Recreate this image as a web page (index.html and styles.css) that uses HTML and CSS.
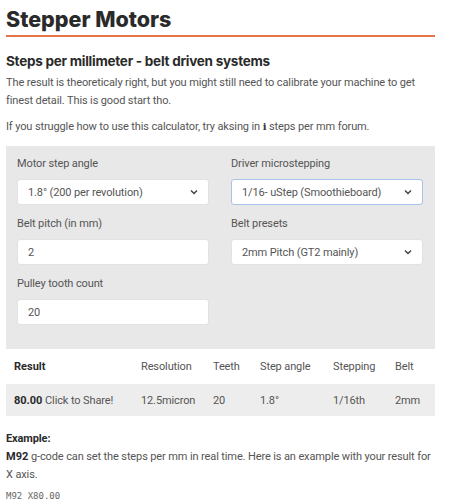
FILE: index.html
```html
<!DOCTYPE html>
<html>
<head>
<meta charset="utf-8">
<link rel="stylesheet" href="styles.css">
</head>
<body>
<div class="page">
  <h1 class="title">Stepper Motors</h1>
  <h2 class="subtitle">Steps per millimeter - belt driven systems</h2>
  <p class="text">The result is theoreticaly right, but you might still need to calibrate your machine to get finest detail. This is good start tho.</p>
  <p class="text">If you struggle how to use this calculator, try aksing in <span class="info">i</span> steps per mm forum.</p>

  <div class="panel">
    <div class="grid">
      <div class="field">
        <div class="label">Motor step angle</div>
        <div class="control select"><span>1.8° (200 per revolution)</span><svg class="chev" width="8" height="6" viewBox="0 0 8 6"><path d="M1 1.5 L4 4.5 L7 1.5" fill="none" stroke="#444" stroke-width="1.5"/></svg></div>
      </div>
      <div class="field">
        <div class="label">Driver microstepping</div>
        <div class="control select focus"><span>1/16- uStep (Smoothieboard)</span><svg class="chev" width="8" height="6" viewBox="0 0 8 6"><path d="M1 1.5 L4 4.5 L7 1.5" fill="none" stroke="#444" stroke-width="1.5"/></svg></div>
      </div>
      <div class="field">
        <div class="label">Belt pitch (in mm)</div>
        <div class="control"><span>2</span></div>
      </div>
      <div class="field">
        <div class="label">Belt presets</div>
        <div class="control select"><span>2mm Pitch (GT2 mainly)</span><svg class="chev" width="8" height="6" viewBox="0 0 8 6"><path d="M1 1.5 L4 4.5 L7 1.5" fill="none" stroke="#444" stroke-width="1.5"/></svg></div>
      </div>
      <div class="field">
        <div class="label">Pulley tooth count</div>
        <div class="control"><span>20</span></div>
      </div>
    </div>
  </div>

  <table class="results">
    <thead>
      <tr>
        <th class="c1 strong">Result</th>
        <th class="c2">Resolution</th>
        <th class="c3">Teeth</th>
        <th class="c4">Step angle</th>
        <th class="c5">Stepping</th>
        <th class="c6">Belt</th>
      </tr>
    </thead>
    <tbody>
      <tr>
        <td><b>80.00</b> Click to Share!</td>
        <td>12.5micron</td>
        <td>20</td>
        <td>1.8°</td>
        <td>1/16th</td>
        <td>2mm</td>
      </tr>
    </tbody>
  </table>

  <div class="example">
    <div class="ex-title">Example:</div>
    <p class="text"><b class="dark">M92 </b>g-code can set the steps per mm in real time. Here is an example with your result for X axis.</p>
    <div class="code">M92 X80.00</div>
  </div>
</div>
</body>
</html>
```
FILE: styles.css
```css
html, body {
  margin: 0;
  padding: 0;
  background: #fff;
}
.page {
  width: 429px;
  padding: 0 6px;
  font-family: Roboto, "Liberation Sans", sans-serif;
  font-size: 11px;
  letter-spacing: -0.12px;
  color: #555;
}
.title {
  margin: 0;
  padding-top: 6px;
  font-family: Inter, "Liberation Sans", sans-serif;
  font-size: 21.5px;
  font-weight: 800;
  line-height: 26px;
  color: #2a2a2a;
  letter-spacing: 0;
  padding-bottom: 3px;
  border-bottom: 2px solid #e4744a;
}
.subtitle {
  margin: 15px 0 0;
  font-family: Inter, "Liberation Sans", sans-serif;
  font-size: 13.5px;
  font-weight: 700;
  line-height: 18px;
  letter-spacing: -0.25px;
  color: #2a2a2a;
}
.text {
  margin: 4px 0 0;
  line-height: 18px;
}
.text + .text {
  margin-top: 8px;
}
.info {
  font-weight: 900;
  color: #333;
  font-family: "DejaVu Serif", serif;
  font-size: 10px;
  letter-spacing: 0;
}
.panel {
  margin-top: 10px;
  background: #e8e8e8;
  padding: 10px 12px 24px 11px;
}
.grid {
  display: grid;
  grid-template-columns: 192px 192px;
  column-gap: 22px;
  row-gap: 11px;
}
.label {
  line-height: 16px;
  margin-bottom: 7px;
  color: #555;
}
.control {
  height: 26px;
  box-sizing: border-box;
  background: #fff;
  border: 1px solid #e2e2e2;
  border-radius: 3px;
  display: flex;
  align-items: center;
  padding: 0 10px;
  color: #555;
}
.select {
  justify-content: space-between;
}
.focus {
  border-color: #a9c3e8;
}
.chev {
  display: block;
}
.results {
  width: 429px;
  border-collapse: collapse;
  margin-top: 0;
  table-layout: fixed;
}
.results th, .results td {
  text-align: left;
  padding: 0 0 0 8px;
  font-weight: 400;
  color: #555;
  white-space: nowrap;
}
.results th {
  height: 35px;
}
.results td {
  height: 32px;
  background: #ededed;
}
.results th.strong, .results b, .dark {
  font-weight: 700;
  color: #2a2a2a;
  letter-spacing: 0;
}
.c1 { width: 119px; }
.c2 { width: 64px; }
.c3 { width: 39px; }
.c4 { width: 65px; }
.c5 { width: 54px; }
.c6 { width: 40px; }
.example {
  margin-top: 14px;
}
.ex-title {
  font-weight: 700;
  color: #2a2a2a;
  line-height: 17px;
}
.example .text {
  margin-top: 1px;
}
.code {
  margin-top: 7px;
  font-family: "DejaVu Sans Mono", monospace;
  font-size: 9px;
  letter-spacing: 0;
  line-height: 11px;
  color: #666;
}
```
